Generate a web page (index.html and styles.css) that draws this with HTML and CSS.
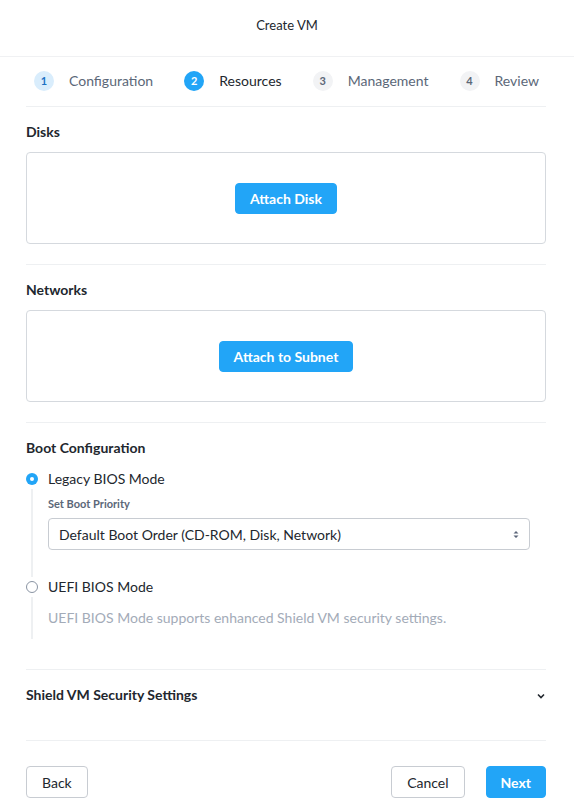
FILE: index.html
```html
<!DOCTYPE html>
<html>
<head>
<meta charset="utf-8">
<link rel="stylesheet" href="styles.css">
</head>
<body>
<div class="header">Create VM</div>
<div class="steps">
  <div class="step done"><span class="num">1</span><span class="lbl">Configuration</span></div>
  <div class="step active"><span class="num">2</span><span class="lbl">Resources</span></div>
  <div class="step"><span class="num">3</span><span class="lbl">Management</span></div>
  <div class="step"><span class="num">4</span><span class="lbl">Review</span></div>
</div>
<div class="content">
  <div class="section">
    <div class="title">Disks</div>
    <div class="box"><button class="btn primary">Attach Disk</button></div>
  </div>
  <div class="section">
    <div class="title">Networks</div>
    <div class="box"><button class="btn primary">Attach to Subnet</button></div>
  </div>
  <div class="section boot">
    <div class="title">Boot Configuration</div>
    <div class="radio-row"><span class="radio checked"></span><span>Legacy BIOS Mode</span></div>
    <div class="radio-body legacy">
      <div class="field-label">Set Boot Priority</div>
      <div class="select">
        <span>Default Boot Order (CD-ROM, Disk, Network)</span>
        <svg class="sel-arrow" width="6" height="9" viewBox="0 0 6 9"><path d="M0.5 3.5 L3 1 L5.5 3.5 Z M0.5 5.5 L3 8 L5.5 5.5 Z" fill="#5a6478"/></svg>
      </div>
    </div>
    <div class="radio-row"><span class="radio"></span><span>UEFI BIOS Mode</span></div>
    <div class="radio-body uefi">
      <div class="desc">UEFI BIOS Mode supports enhanced Shield VM security settings.</div>
    </div>
  </div>
  <div class="section shield">
    <div class="title">Shield VM Security Settings</div>
    <svg class="chev" width="8" height="6" viewBox="0 0 8 6"><path d="M1 1.5 L4 4.5 L7 1.5" fill="none" stroke="#22272e" stroke-width="1.6"/></svg>
  </div>
  <div class="footer">
    <button class="btn outline">Back</button>
    <div class="right">
      <button class="btn outline">Cancel</button>
      <button class="btn primary">Next</button>
    </div>
  </div>
</div>
</body>
</html>
```
FILE: styles.css
```css
* { box-sizing: border-box; }
body {
  margin: 0;
  font-family: Lato, "Open Sans", sans-serif;
  color: #22272e;
  background: #fff;
  width: 574px;
}
.header {
  height: 57px;
  padding-top: 17px;
  font-size: 13px;
  line-height: 16px;
  text-align: center;
  border-bottom: 1px solid #f0f1f3;
  color: #22272e;
}
.steps {
  margin: 0 28px 0 26px;
  height: 50px;
  padding: 0 7px 1px 8px;
  display: flex;
  align-items: center;
  justify-content: space-between;
  border-bottom: 1px solid #eef0f2;
}
.step {
  display: flex;
  align-items: center;
  gap: 15px;
  font-size: 14px;
  line-height: 20px;
  color: #5b6778;
}
.step .num {
  width: 20px;
  height: 20px;
  border-radius: 50%;
  background: #f2f3f5;
  color: #5b6778;
  font-size: 11px;
  font-weight: 700;
  display: flex;
  align-items: center;
  justify-content: center;
}
.step.done .num { background: #d9edfc; color: #1b72c4; }
.step.active .num { background: #22a5f7; color: #fff; }
.step.active .lbl { color: #22272e; }
.content { margin: 0 28px 0 26px; }
.section {
  padding: 16px 0 20px;
  border-bottom: 1px solid #eef0f2;
  position: relative;
}
.title {
  font-size: 14px;
  line-height: 18px;
  height: 18px;
  font-weight: 700;
  margin-bottom: 11px;
}
.box {
  border: 1px solid #d5d9de;
  border-radius: 4px;
  height: 92px;
  display: flex;
  align-items: center;
  justify-content: center;
}
.btn {
  font-family: Lato, "Open Sans", sans-serif;
  font-size: 14px;
  height: 31px;
  padding: 0 14px;
  border-radius: 4px;
  cursor: pointer;
}
.btn.primary {
  background: #22a5f7;
  color: #fff;
  border: 1px solid #22a5f7;
  font-weight: 700;
}
.btn.outline {
  background: #fff;
  color: #22272e;
  border: 1px solid #c8ccd2;
  padding: 0 15px;
}
.boot { padding-bottom: 30px; }
.boot .title { margin-bottom: 12px; }
.radio-row {
  display: flex;
  align-items: center;
  font-size: 14px;
  line-height: 20px;
  height: 20px;
  gap: 10px;
}
.radio {
  width: 12px;
  height: 12px;
  border-radius: 50%;
  border: 1.5px solid #8a94a3;
  background: #fff;
}
.radio.checked {
  border: none;
  background: #22a5f7;
  display: flex;
  align-items: center;
  justify-content: center;
}
.radio.checked::after {
  content: "";
  width: 4px;
  height: 4px;
  border-radius: 50%;
  background: #fff;
}
.radio-body {
  margin-left: 5px;
  border-left: 2px solid #eef0f2;
  padding-left: 15px;
}
.radio-body.legacy { padding-top: 8px; padding-bottom: 27px; }
.radio-body.uefi { padding-top: 12px; padding-bottom: 12px; }
.field-label {
  font-size: 11px;
  line-height: 14px;
  height: 14px;
  font-weight: 700;
  color: #5b6778;
  margin-bottom: 7px;
}
.select {
  height: 32px;
  border: 1px solid #c8ccd2;
  border-radius: 4px;
  display: flex;
  align-items: center;
  justify-content: space-between;
  padding: 0 10px;
  font-size: 14px;
  width: 482px;
}
.desc {
  font-size: 14px;
  line-height: 18px;
  height: 18px;
  color: #a3abb8;
}
.shield { padding-bottom: 36px; }
.shield .title { margin-bottom: 0; }
.chev {
  position: absolute;
  right: 1px;
  top: 23px;
}
.footer {
  display: flex;
  justify-content: space-between;
  padding-top: 25px;
}
.footer .btn { height: 32px; }
.footer .right { display: flex; gap: 21px; }
```
